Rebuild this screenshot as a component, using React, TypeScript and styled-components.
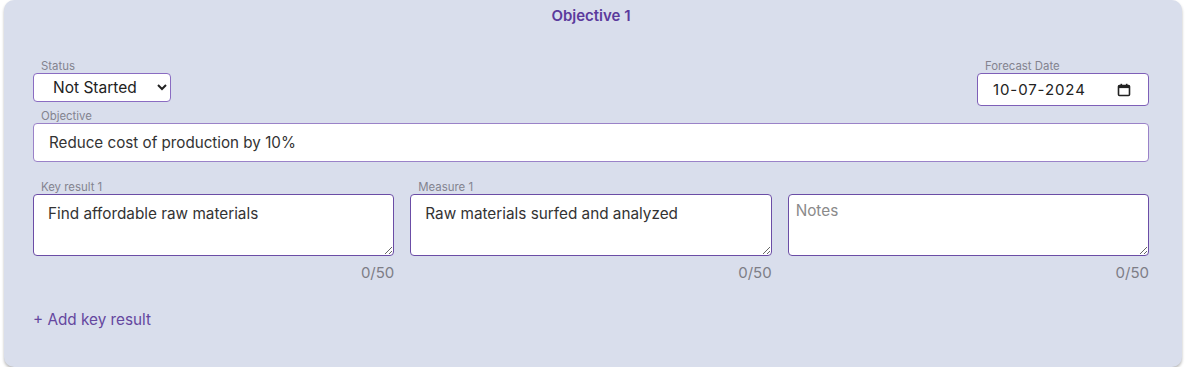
import React from "react";
import styled, { createGlobalStyle } from "styled-components";

const GlobalStyle = createGlobalStyle`
  body {
    margin: 0;
    background: #ffffff;
    font-family: Inter, "Noto Sans", sans-serif;
  }
`;

const Card = styled.div`
  margin: 0 4px;
  width: 1178px;
  box-sizing: border-box;
  background: #d9deec;
  border-radius: 10px;
  box-shadow: 0 2px 3px rgba(0, 0, 0, 0.28);
  padding: 6px 33px 37px 29px;
`;

const Title = styled.h2`
  margin: 0 0 34px;
  text-align: center;
  font-size: 15px;
  line-height: 20px;
  font-weight: 600;
  color: #5b3a9c;
`;

const TopRow = styled.div`
  display: flex;
  justify-content: space-between;
  align-items: flex-start;
  margin-bottom: 4px;
`;

const Field = styled.div`
  display: flex;
  flex-direction: column;
`;

const Label = styled.label`
  font-size: 11.4px;
  line-height: 12px;
  color: #83838f;
  margin: 0 0 1px 8px;
`;

const Select = styled.select`
  width: 138px;
  height: 29px;
  box-sizing: border-box;
  border: 1px solid #8a6cc2;
  border-radius: 4px;
  background: #ffffff;
  font-family: Inter, sans-serif;
  font-size: 15.5px;
  color: #222;
  padding: 0 4px 0 15px;
  outline: none;
`;

const DateBox = styled.div`
  width: 172px;
  height: 33px;
  box-sizing: border-box;
  border: 1px solid #7e5fb8;
  border-radius: 4px;
  background: #ffffff;
  display: flex;
  align-items: center;
  justify-content: space-between;
  padding: 0 17px 0 15px;
`;

const DateText = styled.input`
  border: none;
  outline: none;
  width: 100px;
  padding: 0;
  font-family: Inter, sans-serif;
  font-size: 15px;
  letter-spacing: 0.9px;
  color: #222;
  background: transparent;
`;

const TextInput = styled.input`
  width: 100%;
  height: 39px;
  box-sizing: border-box;
  border: 1px solid #9a82c8;
  border-radius: 4px;
  background: #ffffff;
  padding: 0 15px;
  font-family: Inter, sans-serif;
  font-size: 15.2px;
  color: #333;
  outline: none;
`;

const ResultGrid = styled.div`
  display: grid;
  grid-template-columns: repeat(3, 1fr);
  column-gap: 16px;
  margin-top: 19px;
  width: 1116px;
`;

const TextArea = styled.textarea<{ $filled?: boolean }>`
  width: 100%;
  height: 62px;
  box-sizing: border-box;
  border: 1px solid #6b4da6;
  border-radius: 4px;
  background: #ffffff;
  padding: ${(p) => (p.$filled ? "10px 14px" : "7px 7px")};
  font-family: Inter, sans-serif;
  font-size: 15.3px;
  line-height: 18px;
  color: #333;
  outline: none;
  display: block;
  &::placeholder {
    color: #8a8a8a;
  }
`;

const Counter = styled.div`
  text-align: right;
  font-size: 15px;
  line-height: 20px;
  color: #7d7d86;
  margin-top: 7px;
`;

const Spacer = styled.div`
  height: 13px;
`;

const AddButton = styled.button`
  margin: 27px 0 0;
  padding: 0;
  border: none;
  background: none;
  font-family: Inter, sans-serif;
  font-size: 15.3px;
  line-height: 20px;
  color: #65479f;
  cursor: pointer;
`;

const CalendarIcon = () => (
  <svg width="14" height="14" viewBox="0 0 14 14">
    <rect x="1.5" y="2.5" width="11" height="10" rx="1" fill="none" stroke="#222" strokeWidth="1.6" />
    <rect x="1.5" y="2.5" width="11" height="2.6" fill="#222" />
    <rect x="3.5" y="0.8" width="1.6" height="2.5" fill="#222" />
    <rect x="8.9" y="0.8" width="1.6" height="2.5" fill="#222" />
  </svg>
);

const results = [
  { label: "Key result 1", value: "Find affordable raw materials" },
  { label: "Measure 1", value: "Raw materials surfed and analyzed" },
  { label: "", value: "" },
];

export default function App() {
  return (
    <>
      <GlobalStyle />
      <Card>
        <Title>Objective 1</Title>
        <TopRow>
          <Field>
            <Label>Status</Label>
            <Select defaultValue="Not Started">
              <option>Not Started</option>
              <option>In Progress</option>
              <option>Completed</option>
            </Select>
          </Field>
          <Field>
            <Label>Forecast Date</Label>
            <DateBox>
              <DateText readOnly value="10-07-2024" />
              <CalendarIcon />
            </DateBox>
          </Field>
        </TopRow>
        <Field>
          <Label>Objective</Label>
          <TextInput defaultValue="Reduce cost of production by 10%" />
        </Field>
        <ResultGrid>
          {results.map((r, i) => (
            <Field key={i}>
              {r.label ? <Label>{r.label}</Label> : <Spacer />}
              <TextArea
                $filled={!!r.value}
                defaultValue={r.value}
                placeholder={r.value ? undefined : "Notes"}
              />
              <Counter>0/50</Counter>
            </Field>
          ))}
        </ResultGrid>
        <AddButton>+ Add key result</AddButton>
      </Card>
    </>
  );
}
